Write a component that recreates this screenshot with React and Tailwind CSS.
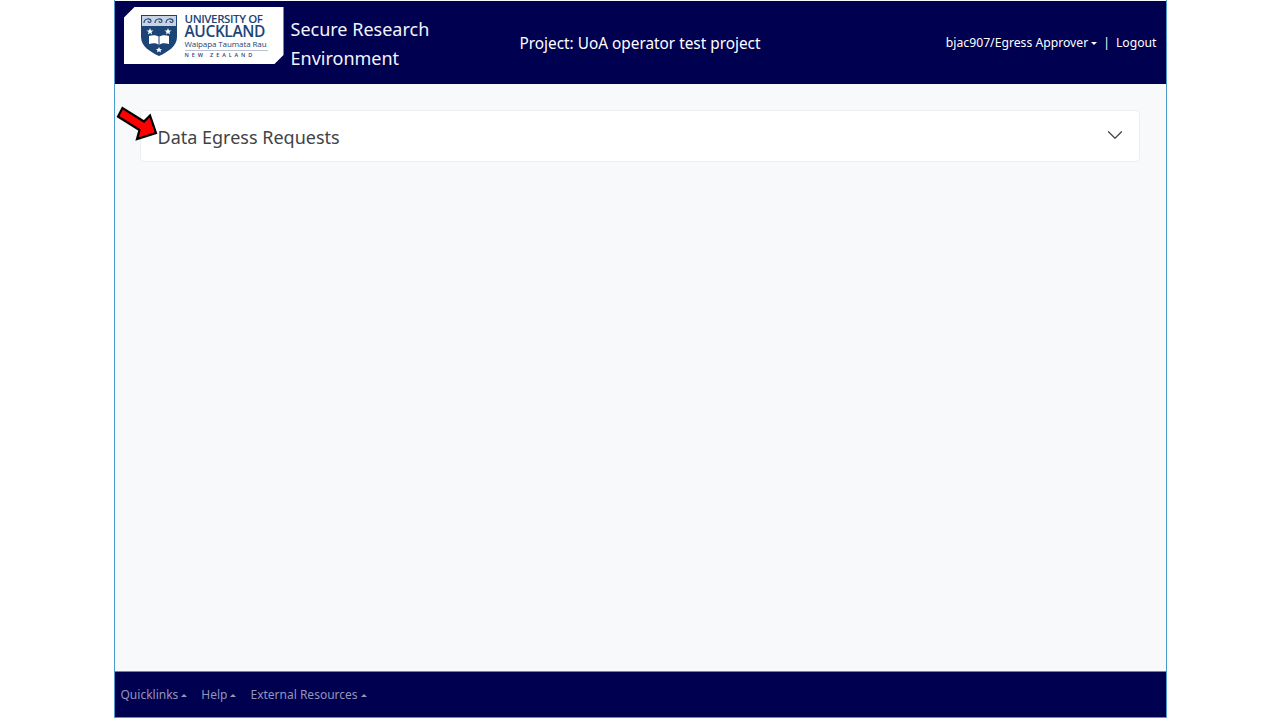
import React from 'react';
import { ChevronDown } from 'lucide-react';

function Caret({ up }) {
  return (
    <span
      className={`inline-block w-0 h-0 ml-[3px] align-middle border-x-[3.500px] border-x-transparent ${
        up ? 'border-b-[3.500px] border-b-current' : 'border-t-[3.500px] border-t-current'
      }`}
    />
  );
}

function Shield() {
  return (
    <svg width="36" height="41" viewBox="0 0 36 41" className="shrink-0">
      <path d="M0 0H36V22C36 31 27 37 18 41C9 37 0 31 0 22Z" fill="#1d4477" />
      <path d="M1 1H35V11H1Z" fill="#c9d3e2" />
      <path d="M3 8C3 3 10 3 10 6C10 8 7 8 7 6M14 8C14 3 21 3 21 6C21 8 18 8 18 6M25 8C25 3 32 3 32 6C32 8 29 8 29 6" fill="none" stroke="#1d4477" strokeWidth="1.2" />
      <path d="M9 13L10 15.500L12.500 15.500L10.500 17L11 19.500L9 18L7 19.500L7.500 17L5.500 15.500L8 15.500Z" fill="#fff" />
      <path d="M27 13L28 15.500L30.500 15.500L28.500 17L29 19.500L27 18L25 19.500L25.500 17L23.500 15.500L26 15.500Z" fill="#fff" />
      <path d="M8 21C12 19.500 16 20 18 22C20 20 24 19.500 28 21V29C24 28 20 28 18 30C16 28 12 28 8 29Z" fill="#fff" />
      <path d="M18 22V30" stroke="#1d4477" />
      <path d="M18 32L19 34L21 34L19.500 35.500L20 37.500L18 36.300L16 37.500L16.500 35.500L15 34L17 34Z" fill="#fff" />
    </svg>
  );
}

function Logo() {
  return (
    <div className="w-[160px] h-[57px] bg-white flex items-center pl-[17px] gap-[8px] [clip-path:polygon(11px_0,100%_0,100%_calc(100%-9px),calc(100%-9px)_100%,0_100%,0_11px)]">
      <Shield />
      <div className="flex flex-col items-stretch text-[#1d4477] w-[83px] font-['Open_Sans',sans-serif]">
        <span className="text-[11.500px] leading-[11px] whitespace-nowrap tracking-[-0.4px] font-semibold">UNIVERSITY OF</span>
        <span className="text-[15.500px] leading-[15px] whitespace-nowrap tracking-[-0.4px] font-semibold">AUCKLAND</span>
        <span className="text-[8px] leading-[10px] whitespace-nowrap border-b border-[#b8c2d4] pb-[1px] tracking-[-0.1px]">Waipapa Taumata Rau</span>
        <span className="text-[5.500px] leading-[8px] whitespace-nowrap tracking-[2.9px] font-semibold">NEW ZEALAND</span>
      </div>
    </div>
  );
}

function Arrow() {
  return (
    <svg width="46" height="40" viewBox="0 0 46 40" className="absolute left-[1px] top-[19px]">
      <path d="M6.500 5L2 13.500L23.500 27L21 36L40 30L34 12.500L28 18.500Z" fill="#ff0000" stroke="#000" strokeWidth="2.200" strokeLinejoin="miter" />
    </svg>
  );
}

export default function App() {
  return (
    <div className="h-screen bg-white flex justify-center font-['Noto_Sans',sans-serif]">
      <div className="w-[1053px] h-[718px] flex flex-col border-x border-b border-[#4a9bc9] bg-[#f8f9fb]">
        <header className="h-[83px] mt-px bg-[#000050] flex items-start text-white pl-[9px] pr-[9px] shrink-0">
          <div className="mt-[6px]">
            <Logo />
          </div>
          <div className="ml-[7px] mt-[14px] w-[160px] text-[18px] leading-[29px] text-[#f4f4fa]">
            Secure Research
            <br />
            Environment
          </div>
          <div className="ml-[69px] mt-[32px] text-[15.350px] leading-[21px] whitespace-nowrap">Project: UoA operator test project</div>
          <div className="ml-auto mt-[33px] text-[12.200px] leading-[18px] whitespace-nowrap flex items-center">
            <span>bjac907/Egress Approver</span>
            <Caret />
            <span className="mx-[6px]">|</span>
            <span>Logout</span>
          </div>
        </header>

        <main className="flex-1 relative pl-[25px] pr-[26px] pt-[26px]">
          <Arrow />
          <div className="h-[52px] bg-white border border-[#eceef0] rounded-[4px] flex items-center justify-between pl-[17px] pr-[11px]">
            <span className="text-[18px] leading-[26px] mt-[2px] text-[#3f4347]">Data Egress Requests</span>
            <ChevronDown size={26} strokeWidth={1.1} className="text-[#3f4347] mb-[3px]" />
          </div>
        </main>

        <footer className="h-[46px] bg-[#000050] border-t border-[#7c7ca6] shrink-0 flex items-center gap-[14px] pl-[6px] text-[12px] text-[#9494ba]">
          <span className="whitespace-nowrap">Quicklinks<Caret up /></span>
          <span className="whitespace-nowrap">Help<Caret up /></span>
          <span className="whitespace-nowrap">External Resources<Caret up /></span>
        </footer>
      </div>
    </div>
  );
}
